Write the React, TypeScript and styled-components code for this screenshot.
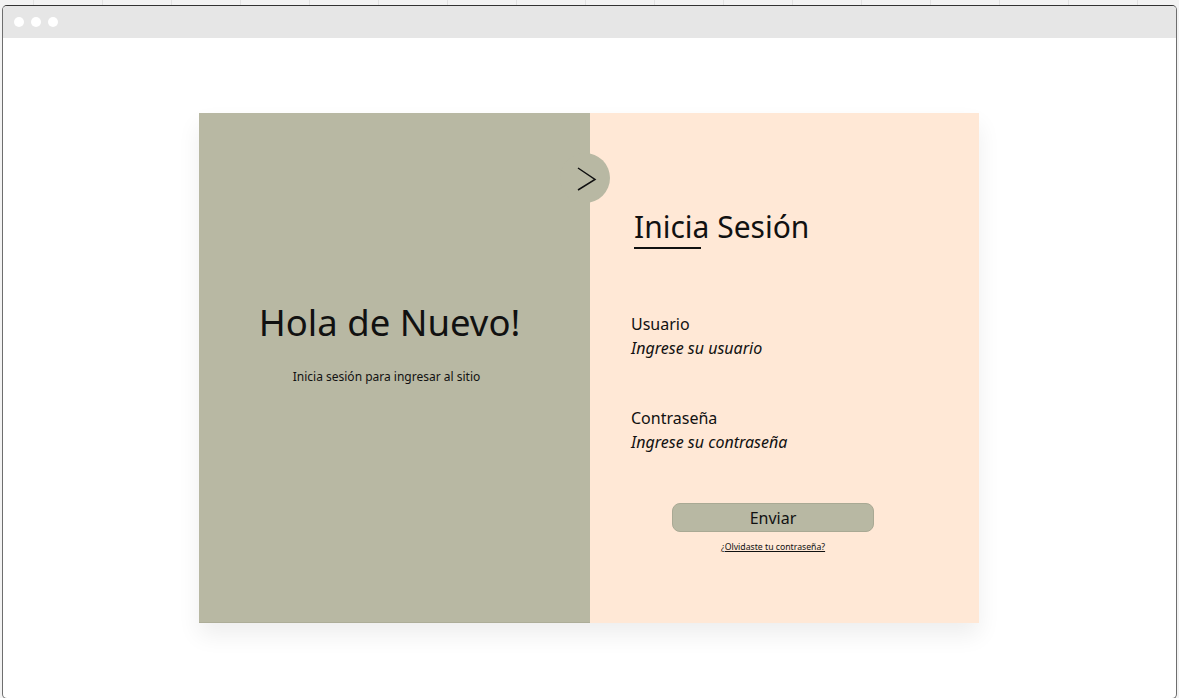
import React from "react";
import styled, { createGlobalStyle } from "styled-components";

const Global = createGlobalStyle`
  html, body {
    margin: 0;
    padding: 0;
    width: 100%;
    height: 100%;
    overflow: hidden;
  }
  body {
    background-color: #f3f3f3;
    background-image: repeating-linear-gradient(
      to right,
      transparent 0px,
      transparent 33px,
      #e2e2e2 33px,
      #e2e2e2 34px,
      transparent 34px,
      transparent 69px
    );
    font-family: "Noto Sans", "Open Sans", sans-serif;
    color: #111;
  }
`;

const Page = styled.div`
  padding: 5px 2px 0 2px;
  height: 698px;
  box-sizing: border-box;
`;

const Window = styled.div`
  width: 1175px;
  height: 694px;
  box-sizing: border-box;
  border: 1px solid #6e6e6e;
  border-top-color: #333;
  border-radius: 5px;
  background: #ffffff;
  overflow: hidden;
  display: flex;
  flex-direction: column;
`;

const TitleBar = styled.div`
  height: 32px;
  background: #e6e6e6;
  display: flex;
  align-items: center;
  gap: 7px;
  padding-left: 11px;
  flex-shrink: 0;
`;

const Dot = styled.span`
  width: 10px;
  height: 10px;
  border-radius: 50%;
  background: #ffffff;
`;

const Content = styled.div`
  flex: 1;
  display: flex;
  justify-content: center;
  padding-top: 75px;
  padding-right: 1px;
`;

const Card = styled.div`
  position: relative;
  display: grid;
  grid-template-columns: 391px 389px;
  height: 510px;
  box-shadow: 0 12px 22px rgba(0, 0, 0, 0.07);
`;

const LeftPanel = styled.section`
  background: #b8b8a3;
  border-bottom: 1px solid #adad98;
  display: flex;
  flex-direction: column;
  align-items: center;
  padding-top: 186px;
  padding-right: 10px;
  box-sizing: border-box;
`;

const Welcome = styled.h1`
  margin: 0;
  font-size: 36.5px;
  font-weight: 400;
  line-height: 46px;
  color: #111;
`;

const WelcomeSub = styled.p`
  margin: 24px 6px 0 0;
  font-size: 12px;
  line-height: 16px;
  color: #111;
`;

const RightPanel = styled.section`
  background: #ffe8d6;
  display: flex;
  flex-direction: column;
  padding: 94px 0 0 41px;
  box-sizing: border-box;
`;

const Title = styled.h2`
  margin: 0 0 0 3px;
  font-size: 30px;
  font-weight: 400;
  line-height: 40px;
  color: #111;
`;

const TitleRule = styled.div`
  margin: 0 0 0 3px;
  width: 67px;
  height: 2px;
  background: #111;
`;

const Field = styled.div<{ $top: number }>`
  display: flex;
  flex-direction: column;
  margin-top: ${(p) => p.$top}px;
`;

const Label = styled.label`
  font-size: 16px;
  line-height: 24px;
  color: #111;
`;

const Placeholder = styled.span`
  font-size: 16px;
  font-style: italic;
  line-height: 24px;
  color: #111;
`;

const Actions = styled.div`
  margin-top: 49px;
  margin-left: 41px;
  width: 202px;
  display: flex;
  flex-direction: column;
  align-items: center;
`;

const SubmitButton = styled.button`
  width: 202px;
  height: 29px;
  border: 1px solid #a9a994;
  border-radius: 8px;
  background: #b8b8a3;
  font-family: "Noto Sans", sans-serif;
  font-size: 16px;
  color: #111;
  padding: 0;
  cursor: pointer;
`;

const ForgotLink = styled.a`
  margin-top: 9px;
  font-size: 8.7px;
  line-height: 12px;
  color: #111;
  text-decoration: underline;
`;

const Toggle = styled.div`
  position: absolute;
  left: 361px;
  top: 40px;
  width: 50px;
  height: 50px;
  border-radius: 50%;
  background: #b8b8a3;
  display: flex;
  align-items: center;
  justify-content: center;
`;

export default function App() {
  return (
    <>
      <Global />
      <Page>
        <Window>
          <TitleBar>
            <Dot />
            <Dot />
            <Dot />
          </TitleBar>
          <Content>
            <Card>
              <LeftPanel>
                <Welcome>Hola de Nuevo!</Welcome>
                <WelcomeSub>Inicia sesión para ingresar al sitio</WelcomeSub>
              </LeftPanel>
              <RightPanel>
                <Title>Inicia Sesión</Title>
                <TitleRule />
                <Field $top={63}>
                  <Label>Usuario</Label>
                  <Placeholder>Ingrese su usuario</Placeholder>
                </Field>
                <Field $top={46}>
                  <Label>Contraseña</Label>
                  <Placeholder>Ingrese su contraseña</Placeholder>
                </Field>
                <Actions>
                  <SubmitButton>Enviar</SubmitButton>
                  <ForgotLink href="#">¿Olvidaste tu contraseña?</ForgotLink>
                </Actions>
              </RightPanel>
              <Toggle>
                <svg width="50" height="50" viewBox="0 0 50 50">
                  <polyline
                    points="18,15 35,26.5 18,37"
                    fill="none"
                    stroke="#111"
                    strokeWidth="1.5"
                    strokeLinejoin="miter"
                  />
                </svg>
              </Toggle>
            </Card>
          </Content>
        </Window>
      </Page>
    </>
  );
}
